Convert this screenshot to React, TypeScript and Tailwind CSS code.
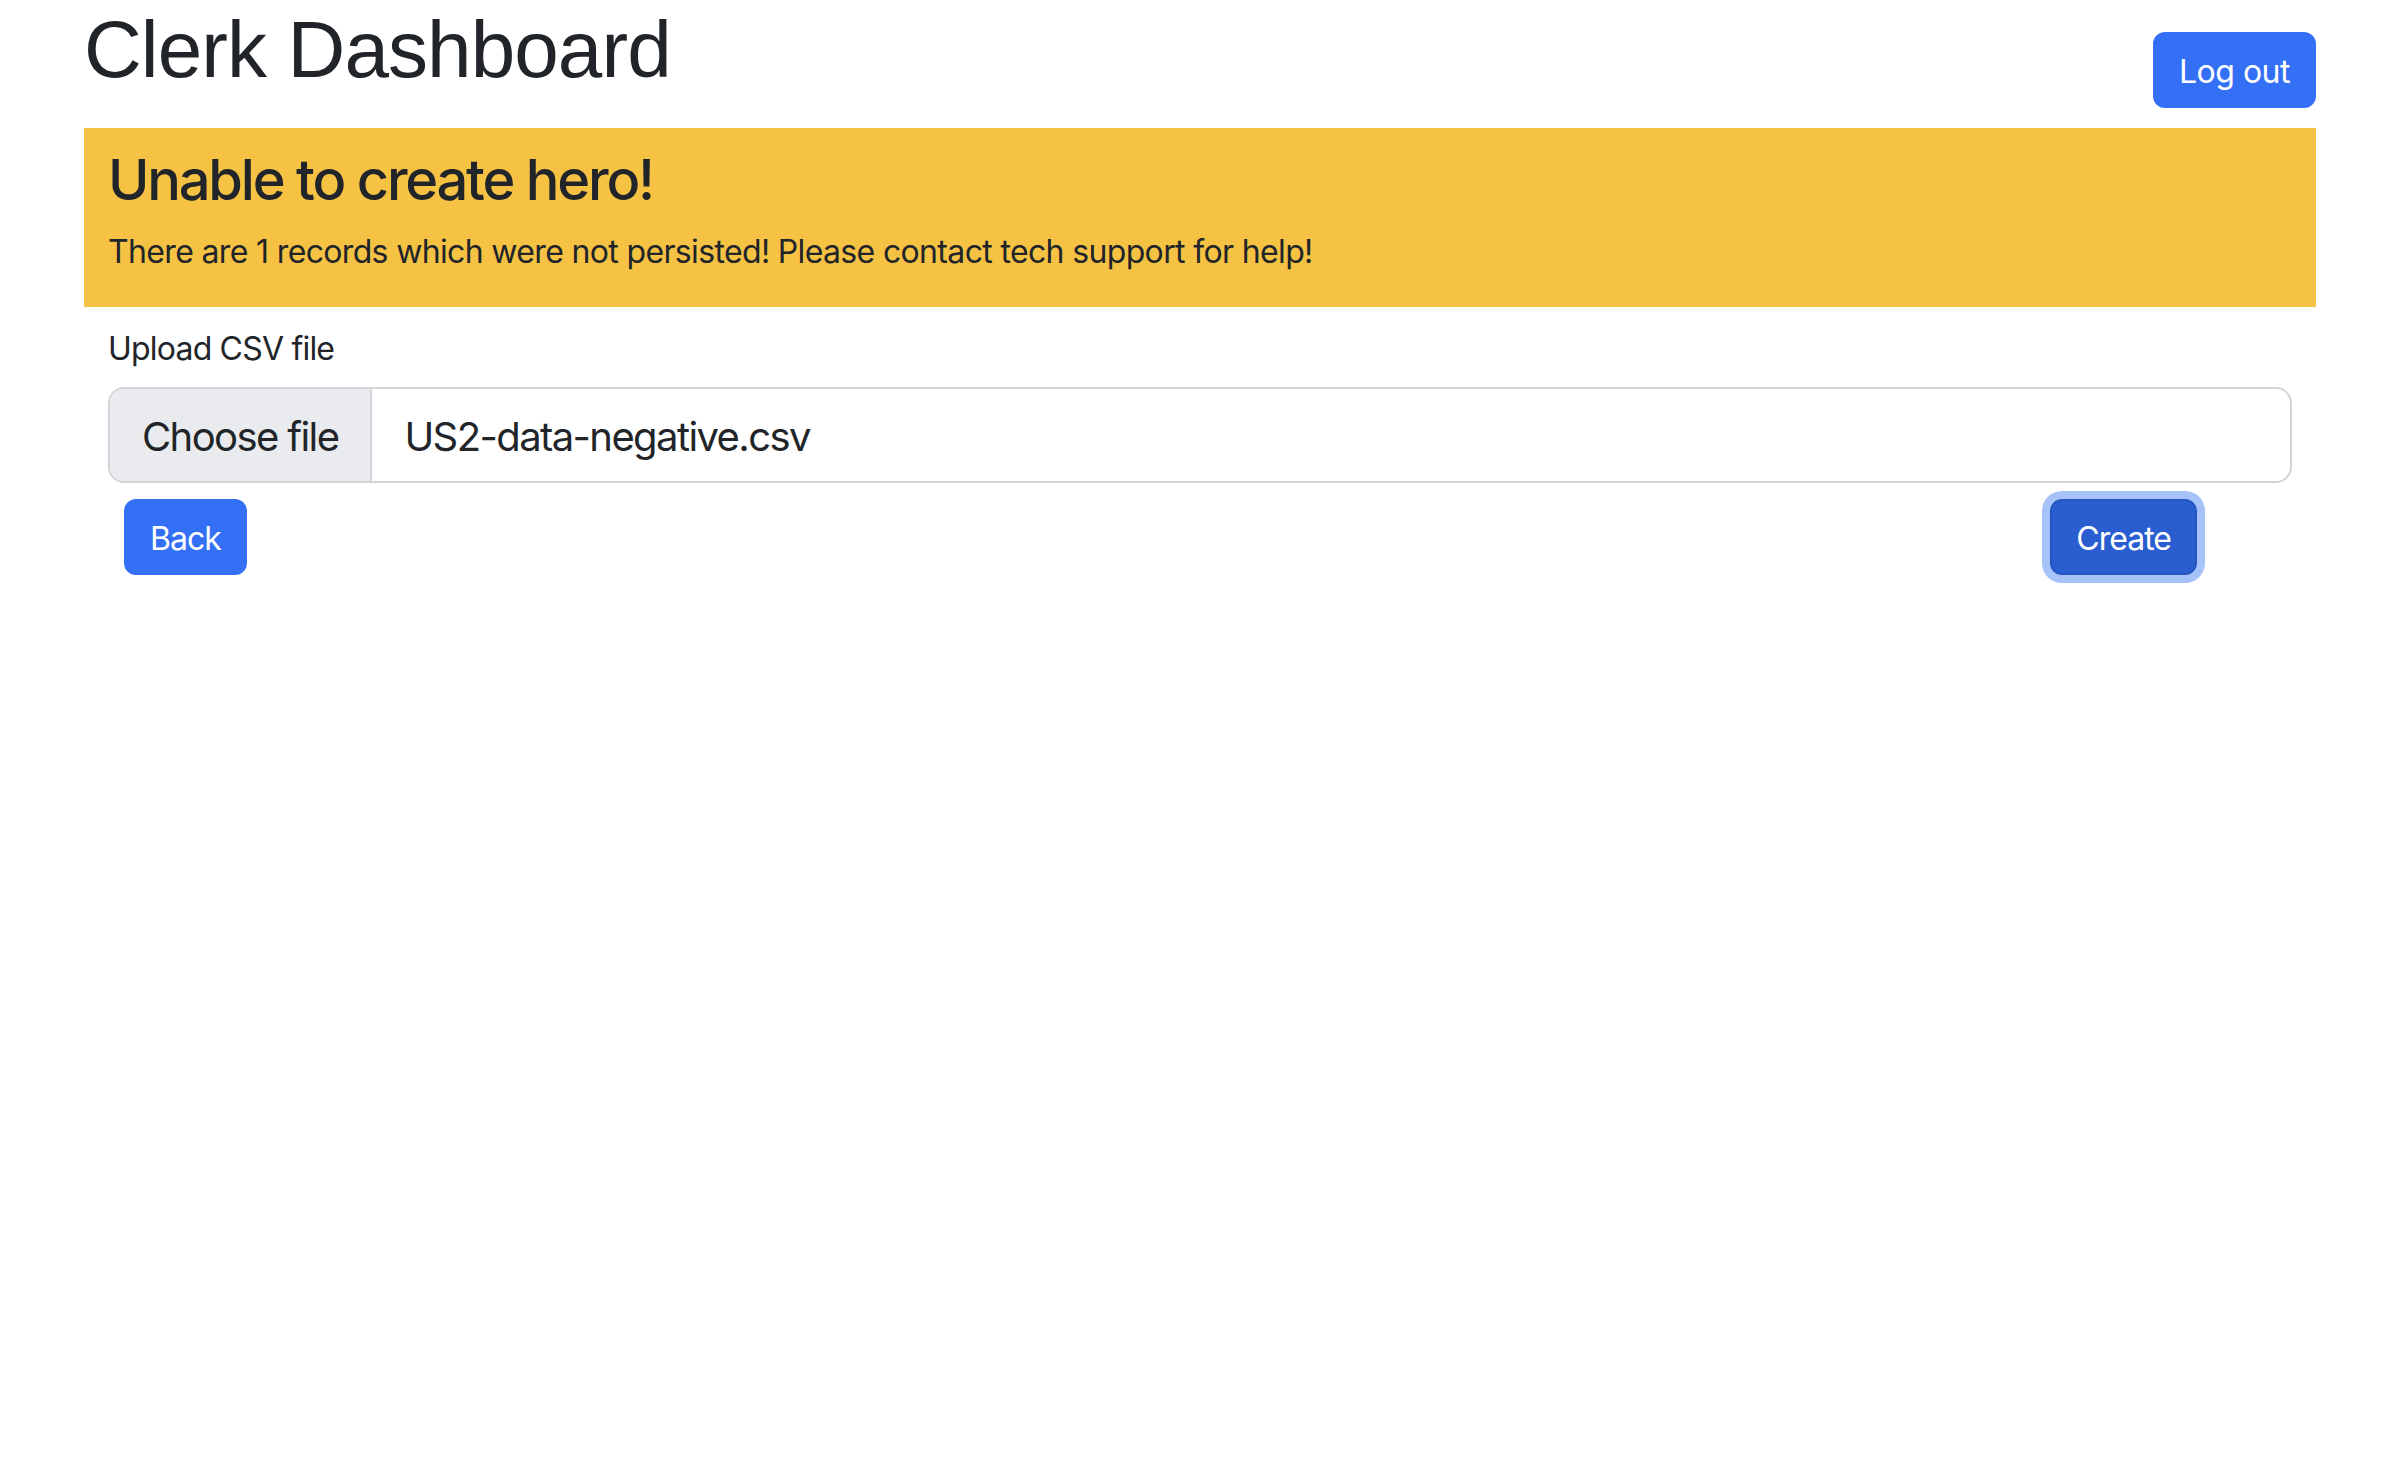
import React from "react";

export default function App() {
  return (
    <div
      className="w-[2400px] min-h-[1472px] bg-white text-[#212529]"
      style={{ fontFamily: "Inter, 'Noto Sans', sans-serif" }}
    >
      <div className="mx-[84px]">
        <div className="flex justify-between items-start h-[128px]">
          <h1
            className="text-[80px] leading-[96px] mt-[2px] font-normal tracking-[-0.9px]"
            style={{ fontFamily: "'Liberation Sans', Arial, sans-serif" }}
          >
            Clerk Dashboard
          </h1>
          <button className="mt-[32px] h-[76px] pt-[4px] px-[24px] rounded-[12px] bg-[#3370f6] border-2 border-[#3370f6] text-white text-[32px] leading-[48px] tracking-[-0.5px]">
            Log out
          </button>
        </div>

        <div className="bg-[#f5c244] pt-[19px] px-[24px] pb-[31px]">
          <h3 className="text-[56px] leading-[67px] font-medium mb-[14px] tracking-[-2.2px]">
            Unable to create hero!
          </h3>
          <p className="text-[32px] leading-[48px] tracking-[-0.65px]">
            There are 1 records which were not persisted! Please contact tech support for help!
          </p>
        </div>

        <div className="px-[24px] pt-[18px]">
          <label className="block text-[32px] leading-[48px] mb-[14px] tracking-[-0.8px]">Upload CSV file</label>
          <div className="flex items-stretch h-[96px] border-2 border-[#d1d5da] rounded-[16px] overflow-hidden bg-white">
            <div className="flex items-center pt-[4px] px-[32px] bg-[#e9ebee] border-r-2 border-[#d1d5da] text-[40px] leading-[60px] tracking-[-1.6px]">
              Choose file
            </div>
            <div className="flex items-center pt-[4px] pl-[32px] text-[40px] leading-[60px] tracking-[-1.6px]">
              US2-data-negative.csv
            </div>
          </div>
          <div className="flex justify-between items-start mt-[16px] pl-[16px] pr-[95px]">
            <button className="h-[76px] pt-[4px] px-[24px] rounded-[12px] bg-[#3370f6] border-2 border-[#3370f6] text-white text-[32px] leading-[48px] tracking-[-1px]">
              Back
            </button>
            <button className="h-[76px] pt-[4px] px-[24px] rounded-[12px] bg-[#2a5dd0] border-2 border-[#2656bf] text-white text-[32px] leading-[48px] tracking-[-1px] ring-8 ring-[#a5c2f9]">
              Create
            </button>
          </div>
        </div>
      </div>
    </div>
  );
}
